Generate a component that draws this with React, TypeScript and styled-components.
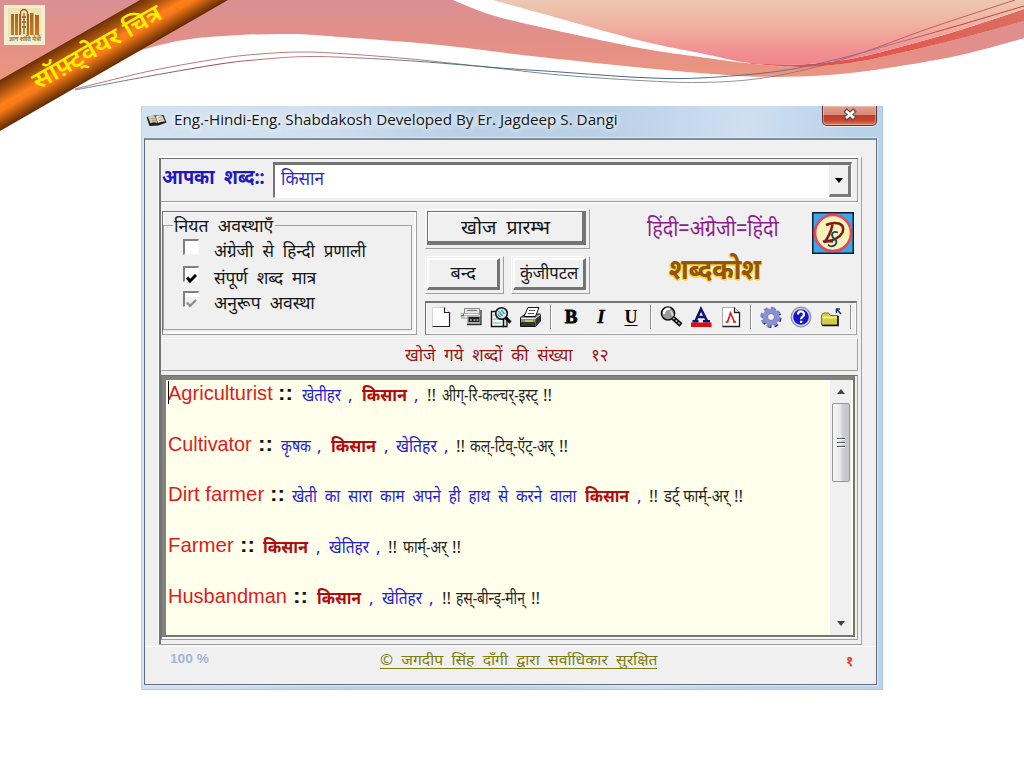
import React, { useLayoutEffect, useRef, useState } from 'react';
import styled, { createGlobalStyle } from 'styled-components';

const deva = '"Noto Sans", "Noto Sans Devanagari", "Liberation Sans", sans-serif';

const GlobalStyle = createGlobalStyle`
  *, *::before, *::after { box-sizing: border-box; }
  body { margin: 0; background: #fff; font-family: ${deva}; }
`;

/* ---------- text squeezed to the metrics of the legacy bitmap fonts ---------- */

const FitBox = styled.span<{ $w: number; $size: number; $color?: string; $bold?: boolean; $latin?: boolean; $dy?: number }>`
  display: block;
  flex: none;
  width: ${p => p.$w}px;
  height: ${p => p.$size}px;
  line-height: ${p => p.$size}px;
  font-size: ${p => p.$size}px;
  margin-top: ${p => p.$dy ?? 0}px;
  color: ${p => p.$color ?? '#161616'};
  font-weight: ${p => (p.$bold ? 700 : 400)};
  font-family: ${p => (p.$latin ? '"Liberation Sans", sans-serif' : 'inherit')};
  white-space: pre;
`;
const FitInner = styled.span`
  display: inline-block;
  transform-origin: 0 50%;
`;

type FitProps = {
  w: number; size: number; color?: string; bold?: boolean; latin?: boolean; dy?: number; className?: string; children: string;
};
function Fit({ w, size, color, bold, latin, dy, className, children }: FitProps) {
  const ref = useRef<HTMLSpanElement>(null);
  const [k, setK] = useState(1);
  useLayoutEffect(() => {
    if (ref.current && ref.current.offsetWidth) setK(w / ref.current.offsetWidth);
  }, [w, size, children]);
  return (
    <FitBox className={className} $w={w} $size={size} $color={color} $bold={bold} $latin={latin} $dy={dy}>
      <FitInner ref={ref} style={{ transform: `scaleX(${k})` }}>{children}</FitInner>
    </FitBox>
  );
}

/* ---------- slide decoration ---------- */

const Slide = styled.main`
  position: relative;
  width: 1024px;
  height: 768px;
  overflow: hidden;
  background: #fff;
  padding: 106px 0 0 141px;
`;
const Art = styled.svg`
  position: absolute;
  left: 0;
  top: 0;
`;

type Pt = [number, number];
function smooth(pts: Pt[], start = 'M') {
  let d = `${start}${pts[0][0]} ${pts[0][1]}`;
  for (let i = 0; i < pts.length - 1; i++) {
    const a = pts[i - 1] ?? pts[i];
    const b = pts[i];
    const c = pts[i + 1];
    const e = pts[i + 2] ?? c;
    d += ` C${b[0] + (c[0] - a[0]) / 6} ${b[1] + (c[1] - a[1]) / 6} ${c[0] - (e[0] - b[0]) / 6} ${c[1] - (e[1] - b[1]) / 6} ${c[0]} ${c[1]}`;
  }
  return d;
}
const lower: Pt[] = [[0, 110], [80, 70], [145, 49], [190, 39], [240, 35], [290, 34], [340, 37], [440, 45], [540, 57], [640, 67.5], [700, 73], [750, 76.5], [800, 76.5], [850, 73], [900, 66], [960, 55], [1024, 38]];
const gapLower: Pt[] = [[453, 0], [490, 14.5], [540, 27], [640, 48], [700, 57], [750, 63.5], [800, 67], [850, 63], [900, 53], [960, 38.5], [1024, 21]];
const peach: Pt[] = [[493, 0], [540, 13], [640, 40.5], [700, 53], [750, 63], [800, 64.5], [850, 59], [900, 47], [960, 30], [1024, 9]];
const lineA: Pt[] = [[75, 89], [150, 71], [220, 58.5], [260, 54], [300, 52], [340, 53.5], [400, 58], [440, 62], [500, 68.5], [560, 75], [640, 80.5], [700, 82.5], [760, 78.5], [820, 66], [870, 50], [930, 28], [1015, 0]];
const lineB: Pt[] = [[75, 90], [150, 76], [220, 64], [260, 59.5], [310, 56.5], [380, 59], [440, 63], [500, 68], [560, 72], [640, 77.5], [700, 78], [780, 71], [840, 58.5], [900, 42], [960, 25], [1024, 6]];

function SlideArt() {
  return (
    <Art width="1024" height="140" viewBox="0 0 1024 140">
      <defs>
        <linearGradient id="rose" x1="0" y1="0" x2="0" y2="78" gradientUnits="userSpaceOnUse">
          <stop offset="0" stopColor="#db8f94" />
          <stop offset=".5" stopColor="#e28f88" />
          <stop offset="1" stopColor="#ec967f" />
        </linearGradient>
        <linearGradient id="roseRight" x1="780" y1="0" x2="1024" y2="0" gradientUnits="userSpaceOnUse">
          <stop offset="0" stopColor="#e38e88" stopOpacity="0" />
          <stop offset="1" stopColor="#e08f8e" />
        </linearGradient>
        <linearGradient id="peach" x1="0" y1="0" x2="0" y2="66" gradientUnits="userSpaceOnUse">
          <stop offset="0" stopColor="#ecc8b2" />
          <stop offset=".4" stopColor="#efb09f" />
          <stop offset=".8" stopColor="#f28e91" />
          <stop offset="1" stopColor="#f0858c" />
        </linearGradient>
        <linearGradient id="red" x1="760" y1="0" x2="1024" y2="0" gradientUnits="userSpaceOnUse">
          <stop offset="0" stopColor="#e54c4c" />
          <stop offset=".5" stopColor="#e2574f" />
          <stop offset="1" stopColor="#da6e60" />
        </linearGradient>
        <linearGradient id="strand" x1="75" y1="0" x2="1024" y2="0" gradientUnits="userSpaceOnUse">
          <stop offset="0" stopColor="#a85048" />
          <stop offset=".3" stopColor="#a0615a" />
          <stop offset=".5" stopColor="#5a6670" />
          <stop offset=".7" stopColor="#777f8c" />
          <stop offset=".82" stopColor="#c05046" />
          <stop offset="1" stopColor="#c23a3a" />
        </linearGradient>
        <linearGradient id="strand2" x1="75" y1="0" x2="1024" y2="0" gradientUnits="userSpaceOnUse">
          <stop offset="0" stopColor="#4f86a8" />
          <stop offset=".15" stopColor="#8f3040" />
          <stop offset=".22" stopColor="#d06c7c" />
          <stop offset=".4" stopColor="#3a6678" />
          <stop offset=".6" stopColor="#30507c" />
          <stop offset=".86" stopColor="#8a7c9c" />
          <stop offset=".92" stopColor="#b83038" />
          <stop offset="1" stopColor="#c43038" />
        </linearGradient>
        <linearGradient id="ribbon" x1="35" y1="60" x2="57" y2="98.400" gradientUnits="userSpaceOnUse">
          <stop offset="0" stopColor="#6a3004" />
          <stop offset=".2" stopColor="#a04e0c" />
          <stop offset=".5" stopColor="#ff8019" />
          <stop offset=".62" stopColor="#f67a18" />
          <stop offset=".85" stopColor="#9a4a0a" />
          <stop offset="1" stopColor="#602a02" />
        </linearGradient>
        <linearGradient id="books" x1="0" y1="0" x2="0" y2="1">
          <stop offset="0" stopColor="#a06a24" />
          <stop offset="1" stopColor="#c7762a" />
        </linearGradient>
      </defs>
      <path d={`M0 0 ${smooth(lower, 'L')} ${smooth([...gapLower].reverse(), 'L')} Z`} fill="url(#rose)" />
      <path d={`${smooth(lower.slice(12))} ${smooth(gapLower.slice(6).reverse(), 'L')} Z`} fill="url(#roseRight)" />
      <path d={`${smooth(gapLower.slice(5))} ${smooth(peach.slice(4).reverse(), 'L')} Z`} fill="url(#red)" />
      <path d={`${smooth(peach)} L1024 0 Z`} fill="url(#peach)" />
      <path d={smooth(lineA)} fill="none" stroke="url(#strand)" strokeWidth=".8" />
      <path d={smooth(lineB)} fill="none" stroke="url(#strand2)" strokeWidth=".9" />
      <path d="M0 80 L140 0 H228 L0 131 Z" fill="url(#ribbon)" />
      <text
        transform="translate(38 90) rotate(-29.8)"
        fontFamily={deva}
        fontSize="24"
        fontWeight="600"
        fill="#ffee00"
        textLength="145"
        lengthAdjust="spacingAndGlyphs"
      >
        सॉफ़्ट्वेयर चित्र
      </text>
      <rect x="4" y="5" width="41" height="40" fill="#f6efcf" />
      <rect x="8" y="8" width="33" height="28" fill="#eee2b0" />
      <g fill="url(#books)">
        <rect x="11" y="14" width="3" height="21" /><rect x="15" y="14" width="3" height="21" />
        <rect x="19" y="14" width="2" height="21" /><rect x="27" y="14" width="2" height="21" />
        <rect x="30" y="13" width="3.500" height="22" /><rect x="35" y="15" width="4" height="20" />
      </g>
      <path d="M20.500 34V13a3.500 3.500 0 0 1 7 0V34M22 17h4M22 22h4M22 27h4M24 13v21" fill="none" stroke="#96602a" strokeWidth="1.300" />
      <text x="9" y="41" fontFamily={deva} fontSize="5.500" fontWeight="700" fill="#8a7440" textLength="32" lengthAdjust="spacingAndGlyphs">
        ज्ञान शांति मैत्री
      </text>
    </Art>
  );
}

/* ---------- window ---------- */

const Window = styled.section`
  width: 742px;
  height: 584px;
  display: flex;
  flex-direction: column;
  padding: 0 6px 5px 3px;
  background: linear-gradient(100deg, #d3e2f1 0, #d0e0f0 20%, #bad0e6 38%, #b9d0e7 55%, #cfdff0 72%, #b9d1e9 85%, #bdd3ea 100%);
  box-shadow: inset 1px 0 #bcd3ea, inset -1px -1px #a5cbe2;
`;
const TitleBar = styled.header`
  height: 32px;
  flex: none;
  display: flex;
  align-items: flex-start;
  padding-left: 2px;
  color: #10151c;
  font-family: "Open Sans", "Noto Sans", sans-serif;
`;
const TitleText = styled(Fit)`
  text-shadow: 0 0 6px #fff, 0 0 8px #fff;
`;
const BookSvg = styled.svg`
  margin: 6px 7px 0 0;
`;
const CloseButton = styled.button`
  margin-left: auto;
  width: 55px;
  height: 20px;
  padding: 0;
  border: 1px solid #5b3038;
  border-top: 0;
  border-radius: 0 0 5px 5px;
  background: linear-gradient(#dfa091 0, #d98a78 45%, #bf3f2a 50%, #c2452c 75%, #dd7d5c 100%);
  box-shadow: inset 0 0 0 1px rgba(255, 225, 215, .45), 0 1px rgba(255, 255, 255, .6);
  display: flex;
  justify-content: center;
`;
const Client = styled.div`
  flex: 1;
  min-height: 0;
  display: flex;
  flex-direction: column;
  border: 1px solid #626c76;
  border-top: 2px solid #7f8d9b;
  background: #f0f0f0;
  box-shadow: 0 0 0 1px #dbe7f3;
`;
const Shell = styled.div`
  margin: 16px 0 0 13px;
  width: 704px;
  height: 489px;
  border: solid;
  border-width: 2px 1px 1px 1px;
  border-color: #fff #a0a0a0 #a0a0a0 #fff;
  padding-right: 3px;
`;
const ShellInner = styled.div`
  height: 486px;
  border: solid #747474;
  border-width: 1px 0 0 2px;
  display: flex;
  flex-direction: column;
  background: #f0f0f0;
`;
const SearchRow = styled.div`
  height: 43px;
  flex: none;
  display: flex;
  border: solid #a0a0a0;
  border-width: 0 1px 1px 0;
  box-shadow: 0 2px #f8f8f8;
  padding: 3px 5px 3px 1px;
`;
const Combo = styled.div`
  margin-left: 8px;
  flex: 1;
  display: flex;
  background: #fff;
  border: solid;
  border-width: 3px 1px 1px 2px;
  border-color: #747474 #fff #fff #747474;
  padding-left: 6px;
`;
const ComboButton = styled.button`
  margin-left: auto;
  width: 22px;
  height: 32px;
  padding: 0;
  background: #f0f0f0;
  border: solid;
  border-width: 1px 3px 3px 1px;
  border-color: #f0f0f0 #7a7a7a #7a7a7a #f0f0f0;
  display: flex;
  align-items: center;
  justify-content: center;
`;
const Arrow = styled.i<{ $up?: boolean; $last?: boolean; $color?: string }>`
  width: 0;
  height: 0;
  ${p => (p.$last ? 'margin-top: auto;' : '')}
  border: 4.5px solid transparent;
  border-width: ${p => (p.$up ? '0 4.5px 5px' : '5px 4.5px 0')};
  border-${p => (p.$up ? 'bottom' : 'top')}-color: ${p => p.$color ?? '#000'};
`;
const Middle = styled.div`
  margin-top: 9px;
  height: 124px;
  flex: none;
  display: flex;
  gap: 8px;
  padding: 0 1px 0 1px;
`;
const OptionsPanel = styled.div`
  width: 255px;
  border: solid;
  border-width: 1px;
  border-color: #747474 #a0a0a0 #a0a0a0 #747474;
  box-shadow: inset 1px 1px #f8f8f8, inset -2px -2px #fbfbfb;
`;
const Group = styled.fieldset`
  margin: 4px 4px 0 0;
  width: 249px;
  height: 114px;
  min-width: 0;
  padding: 5px 0 0 19px;
  border: 1px solid #a0a0a0;
`;
const Legend = styled.legend`
  margin-left: -10px;
  padding: 0 2px 0 1px;
`;
const OptionRow = styled.label<{ $h: number }>`
  height: ${p => p.$h}px;
  display: flex;
  align-items: flex-start;
  gap: 15px;
`;
const CheckBox = styled.span`
  width: 16px;
  height: 16px;
  flex: none;
  background: #fff;
  border: solid;
  border-width: 2px 1px 1px 2px;
  border-color: #808080 #f6f6f6 #f6f6f6 #808080;
`;
const Right = styled.div`
  width: 432px;
  display: flex;
  flex-direction: column;
  justify-content: space-between;
`;
const RightTop = styled.div`
  display: flex;
  margin-top: -2px;
`;
const Buttons = styled.div`
  width: 165px;
  display: flex;
  flex-wrap: wrap;
  justify-content: space-between;
  row-gap: 7px;
`;
const ButtonFrame = styled.div<{ $w: number; $h: number }>`
  width: ${p => p.$w}px;
  height: ${p => p.$h}px;
  padding: 1px 3px 3px 1px;
  border: solid;
  border-width: 1px;
  border-color: #fff #a0a0a0 #a0a0a0 #fff;
  display: flex;
`;
const PushButton = styled.button<{ $default?: boolean }>`
  flex: 1;
  padding: 0;
  font: inherit;
  background: #f0f0f0;
  border: solid;
  border-width: ${p => (p.$default ? '1px 4px 4px 1px' : '2px 3px 3px 2px')};
  border-color: ${p => (p.$default ? '#747474' : '#fff #747474 #747474 #fff')};
  box-shadow: ${p => (p.$default ? 'inset 1px 1px #fff' : 'none')};
  display: flex;
  justify-content: center;
`;
const Brand = styled.div`
  flex: 1;
  padding: 7px 0 0 57px;
`;
const BrandMark = styled.svg`
  margin: 3px 3px 0 0;
`;
const BrandName = styled(Fit)`
  margin-left: 22px;
  text-shadow: 1px 1px #f2d838, -1px 1px #e9cf4a, 1px 2px #f0e060;
`;
const Toolbar = styled.div`
  height: 34px;
  display: flex;
  align-items: flex-start;
  padding-top: 2px;
  border: solid;
  border-width: 2px 1px 1px 1px;
  border-color: #747474 #a0a0a0 #a0a0a0 #747474;
  box-shadow: inset 1px 0 #fff, inset -1px -1px #fff;
`;
const Tool = styled.span`
  width: 30px;
  height: 24px;
  flex: none;
  display: flex;
  align-items: center;
  justify-content: center;
  font: 700 19px/24px "Liberation Serif", serif;
`;
const Bold = styled.b` -webkit-text-stroke: .8px #000; `;
const Italic = styled.i` -webkit-text-stroke: .4px #000; `;
const Under = styled.u` font-size: 18px; text-underline-offset: 2px; `;
const Divider = styled.span`
  width: 2px;
  height: 24px;
  flex: none;
  border-left: 1px solid #909090;
  background: #fff;
  margin: 0 4px 0 4px;
`;
const CountRow = styled.div`
  margin-top: 3px;
  height: 33px;
  flex: none;
  display: flex;
  gap: 18px;
  padding: 6px 0 0 243px;
  border: solid;
  border-width: 1px;
  border-color: #fff #a0a0a0 #a0a0a0 #f0f0f0;
`;
const ResultFrame = styled.div`
  margin-top: 4px;
  height: 265px;
  flex: none;
  border: solid;
  border-width: 1px;
  border-color: #747474 #a0a0a0 #a0a0a0 #747474;
  padding-right: 2px;
`;
const ResultBox = styled.div`
  height: 261px;
  display: flex;
  border: solid;
  border-width: 4px 2px 2px 4px;
  border-color: #82827e #747474 #747474 #82827e;
  background: #ffffec;
  box-shadow: 0 1px #fff;
`;
const Entries = styled.div`
  flex: 1;
  padding: 2px 0 0 2px;
`;
const Entry = styled.div`
  height: 50.700px;
  display: flex;
`;
const Segment = styled(Fit)<{ $gap: number }>`
  margin-left: ${p => p.$gap}px;
`;
const Caret = styled.span`
  width: 1px;
  height: 23px;
  margin: -1px -1px 0 0;
  background: #000;
`;
const ScrollBar = styled.div`
  width: 21px;
  margin-right: 2px;
  background: #f0f0f0;
  display: flex;
  flex-direction: column;
  align-items: center;
  padding: 9px 0 9px;
`;
const Thumb = styled.div`
  margin-top: 9px;
  width: 18px;
  height: 79px;
  border: 1px solid #979797;
  border-radius: 2px;
  background: linear-gradient(90deg, #f6f6f6, #e9e9eb 45%, #cfcfd2 60%, #c4c4c8);
  display: flex;
  flex-direction: column;
  align-items: center;
  justify-content: center;
  gap: 2px;
`;
const Grip = styled.i`
  width: 8px;
  height: 2px;
  border-top: 1px solid #50555c;
  background: #fff;
`;
const Footer = styled.footer`
  flex: 1;
  margin-top: 1px;
  border-top: 1px solid #fff;
  display: flex;
  padding: 4px 23px 0 25px;
`;
const Copyright = styled.div`
  height: 18px;
  width: 277px;
  margin: 0 auto 0 171px;
  padding-top: 1px;
  border-bottom: 1px solid #7d7d12;
`;

/* ---------- icons ---------- */

const icon = { width: 24, height: 24, viewBox: '0 0 24 24' };

const NewDoc = () => (
  <svg {...icon}><path d="M3.500 2.500h12l5 5V21.500h-17z" fill="#fff" stroke="#ccc" strokeWidth=".8" /><path d="M15.500 2.500v5h5V21.500H3.500" fill="none" stroke="#222" strokeWidth="1.200" /></svg>
);
const Tray = () => (
  <svg {...icon}>
    <path d="M5.500 3.500h15v6h-15z" fill="#e4e4e4" stroke="#8a8a8a" />
    <path d="M2 8.500h18v2H2z" fill="#fafafa" stroke="#9a9a9a" strokeWidth=".7" />
    <path d="M8 5.500h10" stroke="#777" />
    <path d="M1 11.500l4-3v3z" fill="#2b9c56" /><path d="M8 11h14v8.500H8z" fill="#b5b5b5" /><path d="M8 19.500h14V5" fill="none" stroke="#333" strokeWidth="1.300" />
    <rect x="9.500" y="12" width="11" height="5" fill="#222" /><path d="M11 15h2m1.500 0h2m1 0h2" stroke="#eee" strokeWidth="1.200" /><path d="M2 13h6" stroke="#999" />
  </svg>
);
const Preview = () => (
  <svg {...icon}>
    <path d="M2.500 6.500h8l4 3v12h-12z" fill="#fff" stroke="#111" strokeWidth="1.400" />
    <path d="M14.500 14v7.500h3.500V13" fill="#d8d8d8" stroke="#111" strokeWidth="1.300" />
    <circle cx="12.500" cy="8.500" r="5.800" fill="#cdeef0" stroke="#111" strokeWidth="1.600" />
    <path d="M9.500 6l4 5M8.500 9l3 3M12.500 5l3 4" stroke="#3f9aa2" strokeWidth="1.300" /><path d="M16.500 12.500l5 5" stroke="#111" strokeWidth="3.200" />
    <path d="M4 10h2M4 14h5M4 18h8" stroke="#58b3b5" />
  </svg>
);
const Printer = () => (
  <svg {...icon}>
    <path d="M1.500 12.500l5-3.500h15v7l-5 5.500h-15z" fill="#8b8b8b" stroke="#111" />
    <path d="M9 2.500h11l-3.500 9H5z" fill="#fff" stroke="#111" /><path d="M10 5.500h6M9 8.500h6" stroke="#555" />
    <path d="M2 13.500h14.500l5-4" fill="none" stroke="#eee" /><path d="M2 17h14v4H2zM16.500 14l5-4v6l-5 5z" fill="#333" />
    <path d="M6 16h8" stroke="#e4d650" strokeWidth="1.500" />
  </svg>
);
const Finder = () => (
  <svg {...icon}>
    <circle cx="9" cy="8.500" r="6.500" fill="#9b9b9b" stroke="#111" strokeWidth="1.600" />
    <path d="M5 9a4.500 4.500 0 0 1 6-5" fill="none" stroke="#fff" strokeWidth="2.400" /><path d="M12 6l2 5" stroke="#ddd" strokeWidth="2" />
    <path d="M14 13l8 7" stroke="#111" strokeWidth="4.600" /><path d="M14 13l7 6" stroke="#bbb" strokeWidth="1.500" strokeDasharray="2 1.500" />
  </svg>
);
const FontColor = () => (
  <svg {...icon}><rect x="2" y="17.500" width="20.500" height="4.500" fill="#e00c0c" /><path d="M3.500 16.300h6M14 16.300h7M6.500 16L12 4l6 12M9 12h6" fill="none" stroke="#12126e" strokeWidth="2.600" /></svg>
);
const FontDoc = () => (
  <svg {...icon}><path d="M3.500 2.500h12l5 5V21.500h-17z" fill="#fff" stroke="#aaa" /><path d="M15.500 2.500v5h5V21.500H3.500" fill="none" stroke="#222" strokeWidth="1.300" /><path d="M8.500 17l3-9 4 9M6.500 17h3m4.500 0h3" fill="none" stroke="#d81818" strokeWidth="1.600" /></svg>
);
const Gear = () => (
  <svg {...icon}>
    <circle cx="12.500" cy="13" r="8.500" fill="none" stroke="#2a2a4a" strokeWidth="3" strokeDasharray="3.600 3.080" />
    <circle cx="11.500" cy="12" r="8.500" fill="none" stroke="#7c82c8" strokeWidth="3.400" strokeDasharray="3.600 3.080" />
    <circle cx="12" cy="12" r="6" fill="none" stroke="#8890d4" strokeWidth="5" /><circle cx="12" cy="12" r="3.500" fill="#f0f0f0" stroke="#4a4f80" strokeWidth=".7" />
  </svg>
);
const Help = () => (
  <svg {...icon}>
    <circle cx="12" cy="12" r="9.800" fill="#d8d8e8" stroke="#8a8aa4" strokeWidth="1.200" /><circle cx="12" cy="12" r="7.800" fill="#1414cc" />
    <path d="M9 9.500a3 3 0 1 1 4.500 2.400c-1 .6-1.500 1-1.500 2.300" fill="none" stroke="#fff" strokeWidth="2.200" /><rect x="11" y="15.800" width="2.300" height="2.200" fill="#fff" />
  </svg>
);
const FolderUp = () => (
  <svg {...icon}>
    <path d="M2.500 20V10l2-2h5l2 2.500h7V20z" fill="#d2cd48" stroke="#77741c" /><path d="M3 20.500h16V11" fill="none" stroke="#111" strokeWidth="1.700" />
    <path d="M3.500 12.500h14" stroke="#fbf8a0" strokeWidth="1.500" /><path d="M17 4h4M17.500 4v4M17.500 4l4.500 5" stroke="#1c2a80" strokeWidth="1.500" />
  </svg>
);

function BookIcon() {
  return (
    <BookSvg width="21" height="16" viewBox="0 0 21 16">
      <path d="M.5 5l8-1.500 9-.5 3 7.500-8 3-9 .5z" fill="#241b12" />
      <path d="M2 5q3.500-2.500 7-.5l2.500 6.500q-4-1.500-7 .5z" fill="#cfc9ae" /><path d="M9.500 4.500q4-2 7-.5l2.500 5.500q-4-.5-7 1.500z" fill="#e6e2ca" />
      <path d="M5 6.500h4M6 8.500h4M12 6l4-1M13 8.500l4-1" stroke="#9a9580" strokeWidth=".8" />
    </BookSvg>
  );
}

/* ---------- data ---------- */

type Kind = 'head' | 'sep' | 'word' | 'hit' | 'say';
type Seg = [Kind, string, number, number];
const K = 'किसान';
const entries: Seg[][] = [
  [['head', 'Agriculturist', 168, 273], ['sep', '::', 278, 293], ['word', 'खेतीहर', 302, 341], ['word', ',', 348, 353], ['hit', K, 362, 407], ['word', ',', 414, 419], ['say', '!!', 427, 436], ['say', 'अीग्-रि-कल्चर्-इस्ट्', 442, 538], ['say', '!!', 543, 552]],
  [['head', 'Cultivator', 168, 252], ['sep', '::', 258, 273], ['word', 'कृषक', 281, 311], ['word', ',', 317, 322], ['hit', K, 331, 376], ['word', ',', 384, 389], ['word', 'खेतिहर', 396, 437], ['word', ',', 444, 449], ['say', '!!', 456, 465], ['say', 'कल्-टिव्-ऍट्-अर्', 470, 553], ['say', '!!', 559, 568]],
  [['head', 'Dirt farmer', 168, 264], ['sep', '::', 270, 285], ['word', 'खेती  का  सारा  काम  अपने  ही  हाथ  से  करने  वाला', 292, 576], ['hit', K, 585, 629], ['word', ',', 637, 642], ['say', '!!', 649, 658], ['say', 'डर्ट् फार्म्-अर्', 664, 729], ['say', '!!', 734, 743]],
  [['head', 'Farmer', 168, 234], ['sep', '::', 240, 255], ['hit', K, 263, 308], ['word', ',', 316, 321], ['word', 'खेतिहर', 329, 369], ['word', ',', 376, 381], ['say', '!!', 388, 397], ['say', 'फार्म्-अर्', 403, 447], ['say', '!!', 452, 461]],
  [['head', 'Husbandman', 168, 287], ['sep', '::', 293, 308], ['hit', K, 317, 361], ['word', ',', 369, 374], ['word', 'खेतिहर', 382, 422], ['word', ',', 429, 434], ['say', '!!', 442, 451], ['say', 'हस्-बीन्ड्-मीन्', 456, 525], ['say', '!!', 531, 540]],
];
const looks: Record<Kind, { size: number; color: string; bold?: boolean; latin?: boolean; dy: number }> = {
  head: { size: 21, color: '#dc1c1c', latin: true, dy: 0 },
  sep: { size: 21, color: '#101010', bold: true, latin: true, dy: 0 },
  word: { size: 17, color: '#2020d0', dy: 4 },
  hit: { size: 17, color: '#b00c0c', bold: true, dy: 4 },
  say: { size: 17, color: '#26261e', dy: 4 },
};

export default function App() {
  return (
    <>
      <GlobalStyle />
      <Slide>
        <SlideArt />
        <Window>
          <TitleBar>
            <BookIcon />
            <TitleText w={444} size={15} dy={6}>Eng.-Hindi-Eng. Shabdakosh Developed By Er. Jagdeep S. Dangi</TitleText>
            <CloseButton aria-label="Close">
              <svg width="16" height="16" viewBox="0 0 16 16">
                <path d="M3 4l10 9M13 4L3 13" stroke="#5c4a50" strokeWidth="5" /><path d="M4 5l8 7M12 5l-8 7" stroke="#fff" strokeWidth="2.800" />
              </svg>
            </CloseButton>
          </TitleBar>
          <Client>
            <Shell>
              <ShellInner>
                <SearchRow>
                  <Fit w={103} size={20} bold color="#2016c0" dy={5}>आपका  शब्द::</Fit>
                  <Combo>
                    <Fit w={43} size={19} color="#2c2cc4" dy={4}>किसान</Fit>
                    <ComboButton aria-label="Open list"><Arrow /></ComboButton>
                  </Combo>
                </SearchRow>
                <Middle>
                  <OptionsPanel>
                    <Group>
                      <Legend><Fit w={99} size={18}>नियत  अवस्थाएँ</Fit></Legend>
                      <OptionRow $h={27}><CheckBox /><Fit w={152} size={18} dy={2}>अंग्रेजी  से  हिन्दी  प्रणाली</Fit></OptionRow>
                      <OptionRow $h={25}>
                        <CheckBox><svg width="13" height="13" viewBox="0 0 13 13"><path d="M2 5.500l3 3.500 6-6" fill="none" stroke="#000" strokeWidth="3" /></svg></CheckBox>
                        <Fit w={102} size={18} dy={2}>संपूर्ण  शब्द  मात्र</Fit>
                      </OptionRow>
                      <OptionRow $h={25}>
                        <CheckBox><svg width="13" height="13" viewBox="0 0 13 13"><path d="M0 0h13v13H0z" fill="#f0f0f0" /><path d="M2 5.500l3 3.500 6-6" fill="none" stroke="#909090" strokeWidth="2.400" /></svg></CheckBox>
                        <Fit w={101} size={18} dy={2}>अनुरूप  अवस्था</Fit>
                      </OptionRow>
                    </Group>
                  </OptionsPanel>
                  <Right>
                    <RightTop>
                      <Buttons>
                        <ButtonFrame $w={165} $h={40}><PushButton $default><Fit w={89} size={19} dy={6}>खोज  प्रारम्भ</Fit></PushButton></ButtonFrame>
                        <ButtonFrame $w={79} $h={38}><PushButton><Fit w={25} size={18} dy={3}>बन्द</Fit></PushButton></ButtonFrame>
                        <ButtonFrame $w={79} $h={38}><PushButton><Fit w={58} size={18} dy={3}>कुंजीपटल</Fit></PushButton></ButtonFrame>
                      </Buttons>
                      <Brand>
                        <Fit w={132} size={23} color="#8c1e8c" dy={0}>हिंदी=अंग्रेजी=हिंदी</Fit>
                        <BrandName w={92} size={29} bold color="#94540a" dy={14}>शब्दकोश</BrandName>
                      </Brand>
                      <BrandMark width="42" height="42" viewBox="0 0 42 42">
                        <rect x=".75" y=".75" width="40.500" height="40.500" fill="#36a9e8" stroke="#141c28" strokeWidth="1.500" />
                        <circle cx="21" cy="21" r="18" fill="#f4f4b8" stroke="#ea4460" strokeWidth="2.600" />
                        <path d="M14 13q7-3 13-1.500 6 2.500 3.500 9-4 7.500-18.500 9.500M20.500 12.500q-2 10-7.500 17M11 29.500q5-1 10 0" fill="none" stroke="#861818" strokeWidth="2.600" />
                        <path d="M26 20.500q-5-2-6 2 0 3 3 4.500 3 3 0 6-4 3-7-.5" fill="none" stroke="#14485c" strokeWidth="1.800" />
                      </BrandMark>
                    </RightTop>
                    <Toolbar>
                      <Tool><NewDoc /></Tool><Tool><Tray /></Tool><Tool><Preview /></Tool><Tool><Printer /></Tool>
                      <Divider />
                      <Tool><Bold>B</Bold></Tool><Tool><Italic>I</Italic></Tool><Tool><Under>U</Under></Tool>
                      <Divider />
                      <Tool><Finder /></Tool><Tool><FontColor /></Tool><Tool><FontDoc /></Tool>
                      <Divider />
                      <Tool><Gear /></Tool><Tool><Help /></Tool><Tool><FolderUp /></Tool>
                      <Divider />
                    </Toolbar>
                  </Right>
                </Middle>
                <CountRow>
                  <Fit w={168} size={18} color="#961414">खोजे  गये  शब्दों  की  संख्या</Fit>
                  <Fit w={18} size={18} color="#961414">१२</Fit>
                </CountRow>
                <ResultFrame>
                  <ResultBox>
                    <Entries>
                      {entries.map((row, r) => (
                        <Entry key={r}>
                          {r === 0 && <Caret />}
                          {row.map(([kind, text, from, to], i) => (
                            <Segment key={i} $gap={from - (i ? row[i - 1][3] : 168)} w={to - from} {...looks[kind]}>{text}</Segment>
                          ))}
                        </Entry>
                      ))}
                    </Entries>
                    <ScrollBar>
                      <Arrow $up $color="#444" />
                      <Thumb><Grip /><Grip /><Grip /></Thumb>
                      <Arrow $last $color="#444" />
                    </ScrollBar>
                  </ResultBox>
                </ResultFrame>
              </ShellInner>
            </Shell>
            <Footer>
              <Fit w={39} size={13} bold latin color="#9db6d8" dy={1}>100 %</Fit>
              <Copyright><Fit w={277} size={15} color="#7d7d12">©  जगदीप  सिंह  दाँगी  द्वारा  सर्वाधिकार  सुरक्षित</Fit></Copyright>
              <Fit w={7} size={15} bold color="#e03c3c" dy={2}>१</Fit>
            </Footer>
          </Client>
        </Window>
      </Slide>
    </>
  );
}
